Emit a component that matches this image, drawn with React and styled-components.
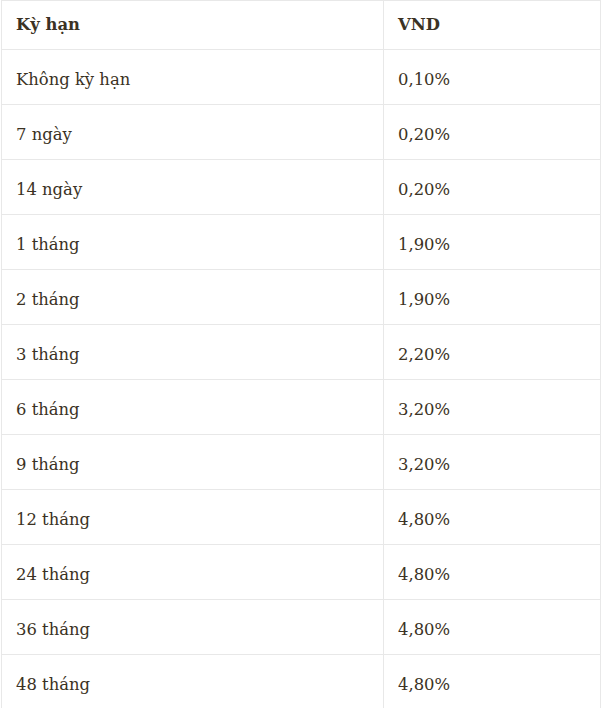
import React from 'react';
import styled, { createGlobalStyle } from 'styled-components';

const GlobalStyle = createGlobalStyle`
  html, body {
    margin: 0;
    padding: 0;
    background: #fff;
  }
`;

const Wrapper = styled.div`
  padding: 0 4px 0 1px;
  background: #fff;
`;

const Table = styled.table`
  width: 600px;
  border-collapse: collapse;
  font-family: 'DejaVu Serif', 'Liberation Serif', serif;
  font-size: 16.4px;
  color: #3b3224;
`;

const HeadCell = styled.th`
  height: 49px;
  padding: 0 14px 2px;
  text-align: left;
  font-weight: 700;
  border: 1px solid #e8e8e8;
  box-sizing: border-box;
  width: ${(p) => p.$w || 'auto'};
`;

const Cell = styled.td`
  height: 55px;
  padding: 4px 14px 0;
  border: 1px solid #e8e8e8;
  box-sizing: border-box;
`;

const rates = [
  ['Không kỳ hạn', '0,10%'],
  ['7 ngày', '0,20%'],
  ['14 ngày', '0,20%'],
  ['1 tháng', '1,90%'],
  ['2 tháng', '1,90%'],
  ['3 tháng', '2,20%'],
  ['6 tháng', '3,20%'],
  ['9 tháng', '3,20%'],
  ['12 tháng', '4,80%'],
  ['24 tháng', '4,80%'],
  ['36 tháng', '4,80%'],
  ['48 tháng', '4,80%'],
];

const App = () => {
  return (
    <Wrapper>
      <GlobalStyle />
      <Table>
        <thead>
          <tr>
            <HeadCell $w="382px">Kỳ hạn</HeadCell>
            <HeadCell>VND</HeadCell>
          </tr>
        </thead>
        <tbody>
          {rates.map(([term, rate]) => (
            <tr key={term}>
              <Cell>{term}</Cell>
              <Cell>{rate}</Cell>
            </tr>
          ))}
        </tbody>
      </Table>
    </Wrapper>
  );
};

export default App;
